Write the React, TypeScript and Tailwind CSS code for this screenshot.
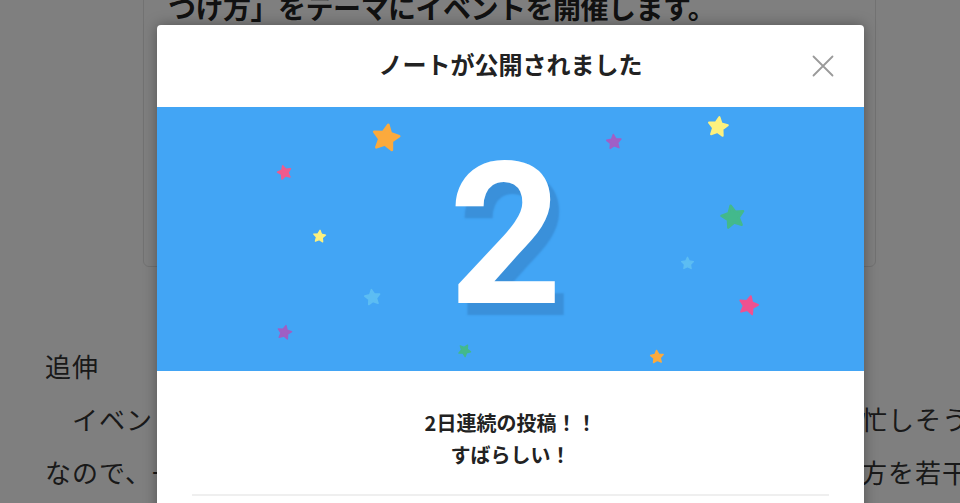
import React from "react";

const JP = { fontFamily: '"Noto Sans CJK JP", "Noto Sans", sans-serif' };

type Star = { x: number; y: number; s: number; c: string; r: number };

// confetti stars scattered over the blue celebration band
const stars: Star[] = [
  { x: 229, y: 31, s: 32, c: "#fbaa3d", r: 10 },
  { x: 127, y: 65, s: 17, c: "#ef5b8d", r: -15 },
  { x: 162, y: 129, s: 15, c: "#fdf17e", r: 5 },
  { x: 215, y: 190, s: 19, c: "#5cbdf3", r: -8 },
  { x: 127, y: 225, s: 17, c: "#9f5fc4", r: 12 },
  { x: 307, y: 243, s: 15, c: "#43b98c", r: 30 },
  { x: 457, y: 35, s: 18, c: "#a05fc6", r: -5 },
  { x: 561, y: 20, s: 24, c: "#fdf17e", r: 8 },
  { x: 576, y: 110, s: 28, c: "#43b98c", r: -12 },
  { x: 530, y: 156, s: 15, c: "#5cbdf3", r: 0 },
  { x: 591, y: 198, s: 23, c: "#ef5190", r: 14 },
  { x: 500, y: 250, s: 16, c: "#fbaa3d", r: -4 },
];

function StarShape({ x, y, s, c, r }: Star) {
  return (
    <svg
      width={s}
      height={s}
      viewBox="0 0 24 24"
      className="absolute"
      style={{ left: x - s / 2, top: y - s / 2, transform: `rotate(${r}deg)` }}
    >
      <path
        d="M12 2 L14.94 7.95 L21.51 8.91 L16.76 13.55 L17.88 20.09 L12 17 L6.12 20.09 L7.24 13.55 L2.49 8.91 L9.06 7.95 Z"
        fill={c}
        stroke={c}
        strokeWidth={2}
        strokeLinejoin="round"
      />
    </svg>
  );
}

export default function App() {
  return (
    <div className="relative w-[960px] h-[503px] overflow-hidden bg-white" style={JP}>
      {/* article page underneath */}
      <div className="flex flex-col text-[#333]">
        <div className="ml-[143px] w-[733px] -mt-[30px] h-[297px] border border-[#e4e4e4] rounded-[6px] pl-6 pt-[22px]">
          <div className="text-[28px] leading-none font-bold tracking-[-0.5px] text-[#222] whitespace-nowrap">
            つけ方」をテーマにイベントを開催します。
          </div>
        </div>
        <div className="ml-[45px] mt-[72px] text-[26px] leading-[53px] tracking-[1px] whitespace-nowrap">
          <div>追伸</div>
          <div className="grid grid-cols-[816px_auto]">
            <span className="overflow-hidden">　イベントの開催日は年末のため、皆さまお</span>
            <span>忙しそうなので</span>
          </div>
          <div className="grid grid-cols-[816px_auto]">
            <span className="overflow-hidden">なので、一部の内容と進め</span>
            <span>方を若干変更します。</span>
          </div>
        </div>
      </div>

      {/* dim overlay */}
      <div className="absolute inset-0 bg-black/50" />

      {/* published dialog */}
      <div className="absolute left-[157px] top-[25px] w-[707px] h-[520px] bg-white rounded-[4px] overflow-hidden shadow-[0_0_14px_rgba(0,0,0,0.35)]">
        <div className="relative h-[82px] flex items-center justify-center pb-[4px]">
          <h2 className="text-[24px] font-bold text-[#222]">ノートが公開されました</h2>
          <button className="absolute right-[30px] top-[30px] w-[22px] h-[22px] text-[#9a9a9a]" aria-label="閉じる">
            <svg viewBox="0 0 22 22" width="22" height="22">
              <path d="M1.5 1.5 L20.5 20.5 M20.5 1.5 L1.5 20.5" stroke="currentColor" strokeWidth="1.8" strokeLinecap="round" />
            </svg>
          </button>
        </div>

        <div className="relative h-[264px] bg-[#42a5f5] flex items-center justify-center">
          {stars.map((st, i) => (
            <StarShape key={i} {...st} />
          ))}
          <span
            className="relative pr-[10px] pb-[9px] text-[198px] leading-none font-bold text-white [text-shadow:9px_12px_2px_#3a90da]"
            style={{ fontFamily: 'Roboto, "Liberation Sans", sans-serif' }}
          >
            2
          </span>
        </div>

        <div className="pt-[36px] text-center text-[20px] leading-[32px] font-bold text-[#222]">
          <p>2日連続の投稿！！</p>
          <p>すばらしい！</p>
        </div>
        <div className="mx-[35px] mt-[23px] border-t-2 border-[#efefef]" />
      </div>
    </div>
  );
}
